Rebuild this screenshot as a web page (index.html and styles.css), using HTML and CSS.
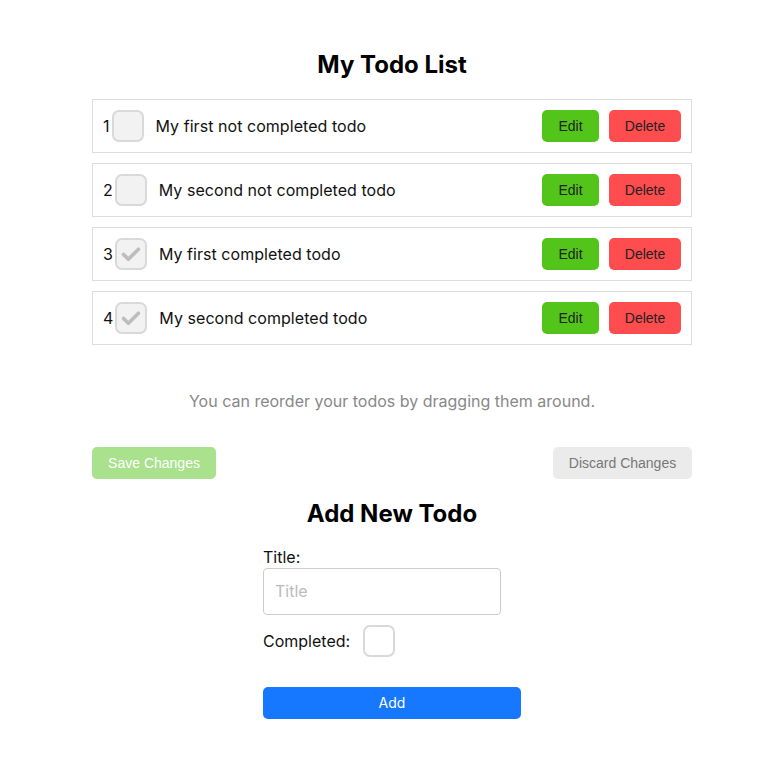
FILE: index.html
```html
<!DOCTYPE html>
<html>
<head>
<meta charset="utf-8">
<link rel="stylesheet" href="styles.css">
</head>
<body>
<div class="page">
  <div class="container">
    <h1 class="title">My Todo List</h1>
    <ul class="list">
      <li class="row">
        <span class="num">1</span>
        <span class="box"></span>
        <span class="text">My first not completed todo</span>
        <button class="btn edit">Edit</button>
        <button class="btn delete">Delete</button>
      </li>
      <li class="row">
        <span class="num">2</span>
        <span class="box"></span>
        <span class="text">My second not completed todo</span>
        <button class="btn edit">Edit</button>
        <button class="btn delete">Delete</button>
      </li>
      <li class="row">
        <span class="num">3</span>
        <span class="box"><svg viewBox="0 0 32 32" width="28" height="28"><path d="M7.5 16.5l5.5 5.5 11.5-11.5" fill="none" stroke="#bdbdbd" stroke-width="4.2" stroke-linecap="round" stroke-linejoin="round"/></svg></span>
        <span class="text">My first completed todo</span>
        <button class="btn edit">Edit</button>
        <button class="btn delete">Delete</button>
      </li>
      <li class="row">
        <span class="num">4</span>
        <span class="box"><svg viewBox="0 0 32 32" width="28" height="28"><path d="M7.5 16.5l5.5 5.5 11.5-11.5" fill="none" stroke="#bdbdbd" stroke-width="4.2" stroke-linecap="round" stroke-linejoin="round"/></svg></span>
        <span class="text">My second completed todo</span>
        <button class="btn edit">Edit</button>
        <button class="btn delete">Delete</button>
      </li>
    </ul>
    <p class="hint">You can reorder your todos by dragging them around.</p>
    <div class="actions">
      <button class="btn save">Save Changes</button>
      <button class="btn discard">Discard Changes</button>
    </div>
    <h2 class="title sub">Add New Todo</h2>
    <form class="form">
      <label class="label">Title:</label>
      <input class="input" type="text" placeholder="Title">
      <div class="completed">
        <span class="label">Completed:</span>
        <span class="box white"></span>
      </div>
      <button type="button" class="add">Add</button>
    </form>
  </div>
</div>
</body>
</html>
```

FILE: styles.css
```css
* { box-sizing: border-box; }
html, body { margin: 0; padding: 0; background: #fff; }
body { font-family: Inter, "Noto Sans", sans-serif; color: #111; }
.page { padding-left: 17px; padding-top: 50px; }
.container { width: 600px; margin: 0 auto; }
.title {
  margin: 0;
  font-size: 24px;
  line-height: 30px;
  font-weight: 700;
  text-align: center;
  color: #000;
}
.list { list-style: none; margin: 19px 0 0; padding: 0; display: flex; flex-direction: column; gap: 10px; }
.row {
  height: 54px;
  border: 1px solid #dddddd;
  display: flex;
  align-items: center;
  padding: 0 10px;
  font-size: 16px;
}
.num { line-height: 20px; margin-right: 2px; }
.box {
  width: 32px;
  height: 32px;
  border: 2px solid #d9d9d9;
  border-radius: 7px;
  background: #f2f2f2;
  display: flex;
  align-items: center;
  justify-content: center;
  flex: none;
}
.box.white { background: #fff; }
.row .box { margin-right: 12px; }
.text { flex: 1; line-height: 20px; letter-spacing: 0.05px; }
.btn {
  font-family: "Liberation Sans", Arial, sans-serif;
  font-size: 14px;
  height: 32px;
  border: none;
  border-radius: 5px;
  padding: 0;
  color: #222;
  cursor: pointer;
}
.edit { background: #52c41a; width: 57px; margin-right: 10px; }
.delete { background: #ff4d4f; width: 72px; }
.hint {
  margin: 46px 0 0;
  text-align: center;
  color: #888;
  font-size: 16px;
  line-height: 20px;
}
.actions { display: flex; justify-content: space-between; margin-top: 36px; }
.save { background: #a9e18c; color: #fff; width: 124px; }
.discard { background: #ebebeb; color: #777; width: 139px; }
.sub { margin-top: 20px; }
.form { width: 258px; margin: 18px auto 0; display: flex; flex-direction: column; align-items: flex-start; }
.label { font-size: 16px; line-height: 20px; color: #111; }
.input {
  margin-top: 1px;
  width: 238px;
  height: 47px;
  border: 1px solid #cccccc;
  border-radius: 4px;
  padding: 0 11px 1px;
  font-family: Inter, sans-serif;
  font-size: 16px;
  outline: none;
}
.input::placeholder { color: #bbb; }
.completed { display: flex; align-items: center; gap: 13px; margin-top: 10px; }
.add {
  margin-top: 30px;
  width: 258px;
  height: 32px;
  border: none;
  border-radius: 5px;
  background: #1677ff;
  color: #fff;
  font-family: Inter, sans-serif;
  font-size: 14px;
  padding: 0 0 1px;
}
```
